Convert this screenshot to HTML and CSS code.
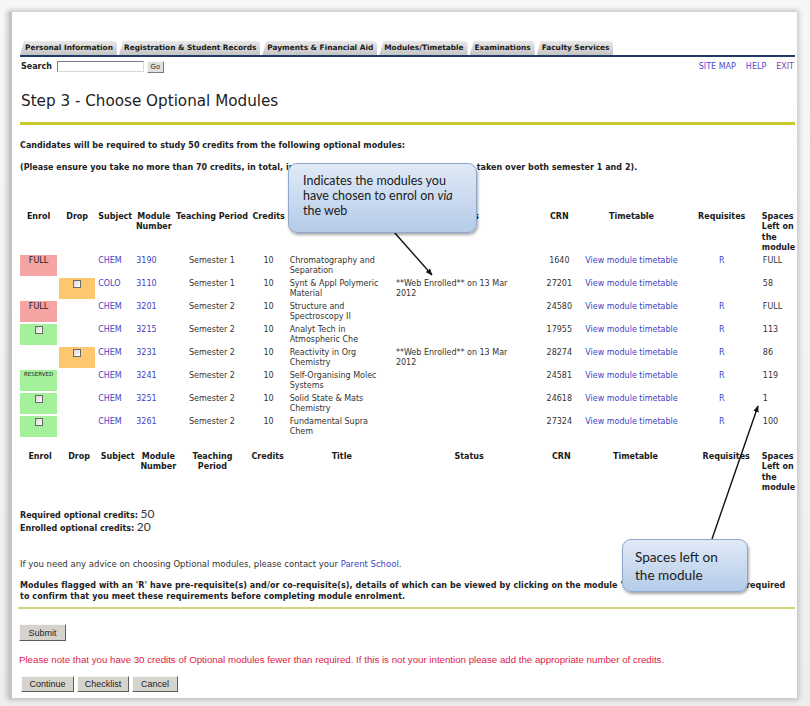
FILE: index.html
```html
<!DOCTYPE html>
<html lang="en">
<head>
<meta charset="utf-8">
<title>Step 3 - Choose Optional Modules</title>
<link rel="stylesheet" href="styles.css">
</head>
<body>
<div class="frame">
  <div class="page">
    <nav class="tabs">
      <span class="tab">Personal Information</span>
      <span class="tab">Registration &amp; Student Records</span>
      <span class="tab">Payments &amp; Financial Aid</span>
      <span class="tab">Modules/Timetable</span>
      <span class="tab">Examinations</span>
      <span class="tab">Faculty Services</span>
    </nav>
    <div class="searchbar">
      <span class="search-label">Search</span>
      <input class="search-input" type="text">
      <button class="go">Go</button>
      <div class="toplinks"><a href="#">SITE MAP</a><a href="#">HELP</a><a href="#" class="visited">EXIT</a></div>
    </div>
    <h1 class="title">Step 3 - Choose Optional Modules</h1>
    <div class="rule"></div>
    <p class="info">Candidates will be required to study 50 credits from the following optional modules:</p>
    <p class="info info2">(Please ensure you take no more than 70 credits, in total, in each semester, i.e. at most 140 credits taken over both semester 1 and 2).</p>

    <table class="modules">
      <colgroup>
        <col class="c-enrol"><col class="c-drop"><col class="c-subj"><col class="c-num"><col class="c-period"><col class="c-cred"><col class="c-title"><col class="c-status"><col class="c-crn"><col class="c-tt"><col class="c-req"><col class="c-space">
      </colgroup>
      <thead>
        <tr>
          <th>Enrol</th><th>Drop</th><th>Subject</th><th>Module Number</th><th>Teaching Period</th><th>Credits</th><th>Title</th><th>Status</th><th>CRN</th><th>Timetable</th><th>Requisites</th><th class="left">Spaces Left on the module</th>
        </tr>
      </thead>
      <tbody>
        <tr>
          <td class="full">FULL</td><td></td><td><a href="#">CHEM</a></td><td><a href="#">3190</a></td><td class="ctr">Semester 1</td><td class="ctr">10</td><td class="ttl">Chromatography and Separation</td><td class="st"></td><td class="ctr">1640</td><td class="ctr"><a href="#">View module timetable</a></td><td class="ctr"><a href="#">R</a></td><td class="sp">FULL</td>
        </tr>
        <tr>
          <td></td><td class="drop"><input class="cb" type="checkbox"></td><td><a href="#">COLO</a></td><td><a href="#">3110</a></td><td class="ctr">Semester 1</td><td class="ctr">10</td><td class="ttl">Synt &amp; Appl Polymeric Material</td><td class="st">**Web Enrolled** on 13 Mar 2012</td><td class="ctr">27201</td><td class="ctr"><a href="#">View module timetable</a></td><td class="ctr"></td><td class="sp">58</td>
        </tr>
        <tr>
          <td class="full">FULL</td><td></td><td><a href="#">CHEM</a></td><td><a href="#">3201</a></td><td class="ctr">Semester 2</td><td class="ctr">10</td><td class="ttl">Structure and Spectroscopy II</td><td class="st"></td><td class="ctr">24580</td><td class="ctr"><a href="#">View module timetable</a></td><td class="ctr"><a href="#">R</a></td><td class="sp">FULL</td>
        </tr>
        <tr>
          <td class="open"><input class="cb" type="checkbox"></td><td></td><td><a href="#">CHEM</a></td><td><a href="#">3215</a></td><td class="ctr">Semester 2</td><td class="ctr">10</td><td class="ttl">Analyt Tech in Atmospheric Che</td><td class="st"></td><td class="ctr">17955</td><td class="ctr"><a href="#">View module timetable</a></td><td class="ctr"><a href="#">R</a></td><td class="sp">113</td>
        </tr>
        <tr>
          <td></td><td class="drop"><input class="cb" type="checkbox"></td><td><a href="#">CHEM</a></td><td><a href="#">3231</a></td><td class="ctr">Semester 2</td><td class="ctr">10</td><td class="ttl">Reactivity in Org Chemistry</td><td class="st">**Web Enrolled** on 13 Mar 2012</td><td class="ctr">28274</td><td class="ctr"><a href="#">View module timetable</a></td><td class="ctr"><a href="#">R</a></td><td class="sp">86</td>
        </tr>
        <tr>
          <td class="open reserved">RESERVED</td><td></td><td><a href="#">CHEM</a></td><td><a href="#">3241</a></td><td class="ctr">Semester 2</td><td class="ctr">10</td><td class="ttl">Self-Organising Molec Systems</td><td class="st"></td><td class="ctr">24581</td><td class="ctr"><a href="#">View module timetable</a></td><td class="ctr"><a href="#">R</a></td><td class="sp">119</td>
        </tr>
        <tr>
          <td class="open"><input class="cb" type="checkbox"></td><td></td><td><a href="#">CHEM</a></td><td><a href="#">3251</a></td><td class="ctr">Semester 2</td><td class="ctr">10</td><td class="ttl">Solid State &amp; Mats Chemistry</td><td class="st"></td><td class="ctr">24618</td><td class="ctr"><a href="#">View module timetable</a></td><td class="ctr"><a href="#">R</a></td><td class="sp">1</td>
        </tr>
        <tr>
          <td class="open"><input class="cb" type="checkbox"></td><td></td><td><a href="#">CHEM</a></td><td><a href="#">3261</a></td><td class="ctr">Semester 2</td><td class="ctr">10</td><td class="ttl">Fundamental Supra Chem</td><td class="st"></td><td class="ctr">27324</td><td class="ctr"><a href="#">View module timetable</a></td><td class="ctr"><a href="#">R</a></td><td class="sp">100</td>
        </tr>
      </tbody>
    </table>

    <table class="modules foot">
      <colgroup>
        <col class="f-enrol"><col class="f-drop"><col class="f-subj"><col class="f-num"><col class="f-period"><col class="f-cred"><col class="f-title"><col class="f-status"><col class="f-crn"><col class="f-tt"><col class="f-req"><col class="f-space">
      </colgroup>
      <thead>
        <tr>
          <th>Enrol</th><th>Drop</th><th>Subject</th><th>Module Number</th><th>Teaching Period</th><th>Credits</th><th>Title</th><th>Status</th><th>CRN</th><th>Timetable</th><th>Requisites</th><th class="left">Spaces Left on the module</th>
        </tr>
      </thead>
    </table>

    <div class="credits">
      <div><b>Required optional credits:</b> <span class="val">50</span></div>
      <div><b>Enrolled optional credits:</b> <span class="val">20</span></div>
    </div>

    <p class="advice">If you need any advice on choosing Optional modules, please contact your <a href="#">Parent School</a>.</p>
    <p class="flag">Modules flagged with an 'R' have pre-requisite(s) and/or co-requisite(s), details of which can be viewed by clicking on the module 'R' link. Students would be required<br>to confirm that you meet these requirements before completing module enrolment.</p>
    <div class="rule2"></div>

    <button class="btn btn-submit">Submit</button>
    <p class="warn">Please note that you have 30 credits of Optional modules fewer than required. If this is not your intention please add the appropriate number of credits.</p>
    <div class="actions">
      <button class="btn btn-continue">Continue</button>
      <button class="btn btn-checklist">Checklist</button>
      <button class="btn btn-cancel">Cancel</button>
    </div>
  </div>

  <svg class="arrows" width="785" height="686" viewBox="0 0 785 686" xmlns="http://www.w3.org/2000/svg">
    <defs>
      <marker id="head" viewBox="0 0 10 8" refX="9" refY="4" markerWidth="7" markerHeight="6" orient="auto" markerUnits="userSpaceOnUse">
        <path d="M0,0 L10,4 L0,8 Z" fill="#111"/>
      </marker>
    </defs>
    <line x1="382" y1="220" x2="420" y2="263" stroke="#111" stroke-width="1.4" marker-end="url(#head)"/>
    <line x1="700" y1="527" x2="746" y2="394" stroke="#111" stroke-width="1.4" marker-end="url(#head)"/>
  </svg>

  <div class="callout callout-enrol">Indicates the modules you have chosen to enrol on <i>via</i> the web</div>
  <div class="callout callout-spaces">Spaces left on the module</div>
</div>
</body>
</html>
```
FILE: styles.css
```css
html, body {
  margin: 0;
  padding: 0;
}
body {
  width: 810px;
  height: 706px;
  overflow: hidden;
  background: linear-gradient(#f7f7f7, #eeeeee);
  font-family: "DejaVu Sans", Verdana, sans-serif;
  color: #333;
}
a {
  color: #3f3fc6;
  text-decoration: none;
}

.frame {
  position: relative;
  box-sizing: border-box;
  margin: 12px 0 0 9px;
  width: 788px;
  height: 686px;
  background: #fff;
  border-left: 3px solid #c4c4c4;
  box-shadow: 0 0 5px 2px rgba(0, 0, 0, 0.2);
}
.page {
  padding: 29px 2px 0 8px;
}

/* tabs */
.tabs {
  display: flex;
  align-items: flex-end;
  gap: 2px;
  height: 14px;
  border-bottom: 2px solid #1f3b66;
}
.tab {
  font-size: 7.4px;
  font-weight: bold;
  color: #1a1a1a;
  line-height: 14px;
  padding: 0 4px 0 5px;
  background: linear-gradient(#e8e8e8, #c4c4c4);
  border-radius: 0 4px 0 0;
  clip-path: polygon(4px 0, 100% 0, 100% 100%, 0 100%);
}

/* search */
.searchbar {
  display: flex;
  align-items: center;
  height: 13px;
  margin-top: 3px;
}
.search-label {
  font-size: 8px;
  font-weight: bold;
  color: #222;
  margin-left: 1px;
}
.search-input {
  box-sizing: border-box;
  width: 87px;
  height: 11px;
  margin: 0 0 0 5px;
  padding: 0;
  border: 1px solid;
  border-color: #7a7a7a #d8d8d8 #d8d8d8 #7a7a7a;
  background: #fff;
}
.go {
  box-sizing: border-box;
  width: 17px;
  height: 12px;
  margin-left: 3px;
  padding: 0;
  font: 7px "DejaVu Sans", sans-serif;
  color: #333;
  background: #e2e0da;
  border: 1px solid;
  border-color: #f4f4f4 #7a7a7a #7a7a7a #f4f4f4;
}
.toplinks {
  margin-left: auto;
  margin-right: 1px;
  display: flex;
  gap: 10px;
  font-size: 8px;
}
.toplinks a {
  color: #4a4ac8;
}
.toplinks a.visited {
  color: #8a3fa6;
}

/* heading */
.title {
  margin: 19px 0 0 1px;
  font-size: 15.2px;
  font-weight: normal;
  line-height: 18px;
  color: #222;
}
.rule {
  height: 3px;
  margin-top: 12px;
  background: #c9c92c;
}
.info {
  margin: 16px 0 0;
  font-size: 8px;
  font-weight: bold;
  line-height: 10px;
  color: #222;
  white-space: nowrap;
  letter-spacing: 0.03px;
}
.info2 {
  margin-top: 12px;
}

/* modules table */
.modules {
  border-collapse: separate;
  border-spacing: 2px;
  table-layout: fixed;
  width: 781px;
  margin: 37px 0 0 -2px;
  font-size: 8px;
  line-height: 10px;
}
.modules th {
  padding: 0;
  vertical-align: top;
  font-weight: bold;
  color: #1a1a1a;
  line-height: 10.3px;
}
.modules th.left {
  text-align: left;
}
.modules td {
  vertical-align: top;
  padding: 1px 1px 0;
  height: 20px;
  color: #333;
}
.c-enrol { width: 37px; }
.c-drop { width: 36px; }
.c-subj { width: 36px; }
.c-num { width: 37px; }
.c-period { width: 75px; }
.c-cred { width: 34px; }
.c-title { width: 101px; }
.c-status { width: 146px; }
.c-crn { width: 40px; }
.c-tt { width: 100px; }
.c-req { width: 76px; }
.c-space { width: 35px; }

.f-enrol { width: 40px; }
.f-drop { width: 34px; }
.f-subj { width: 39px; }
.f-num { width: 38px; }
.f-period { width: 66px; }
.f-cred { width: 40px; }
.f-title { width: 104px; }
.f-status { width: 146px; }
.f-crn { width: 34px; }
.f-tt { width: 110px; }
.f-req { width: 67px; }
.f-space { width: 35px; }

.ctr { text-align: center; }
.modules td.ttl { padding-left: 2px; }
.modules td.st { padding: 1px 22px 0 5px; }
.sp { text-align: left; }

.modules td.full {
  background: #f5a3a3;
  text-align: center;
  color: #222;
}
.modules td.open {
  background: #a3f29b;
  text-align: center;
}
.modules td.drop {
  background: #fcc76f;
  text-align: center;
}
.modules td.reserved {
  font-size: 5.5px;
  line-height: 8px;
  color: #222;
  padding-top: 0;
}
.cb {
  appearance: none;
  -webkit-appearance: none;
  box-sizing: border-box;
  width: 8px;
  height: 8px;
  margin: 1px 0 0;
  border: 1px solid #6a6a6a;
  background: linear-gradient(135deg, #d8d8d8, #ffffff);
  vertical-align: top;
}

.foot {
  margin-top: 11px;
}

/* credits & notes */
.credits {
  margin-top: 13px;
  font-size: 8px;
  line-height: 11px;
}
.credits b {
  color: #222;
}
.credits .val {
  font-family: Lato, "Open Sans", sans-serif;
  font-size: 12px;
  color: #333;
}
.advice {
  margin: 25px 0 0;
  font-size: 8.5px;
  line-height: 10px;
  color: #333;
}
.flag {
  margin: 11px 0 0;
  font-size: 8px;
  font-weight: bold;
  line-height: 11px;
  color: #222;
  white-space: nowrap;
  letter-spacing: 0.08px;
}
.rule2 {
  height: 2px;
  margin: 5px 0 0 -2px;
  background: #d4d47c;
}

.btn {
  box-sizing: border-box;
  height: 17px;
  padding: 0;
  font: 9px "Liberation Sans", Arial, sans-serif;
  color: #222;
  background: #d6d3cd;
  border: 1px solid;
  border-color: #f8f8f8 #5e5e5e #5e5e5e #f8f8f8;
}
.btn-submit {
  display: block;
  width: 47px;
  margin: 15px 0 0 -1px;
}
.warn {
  margin: 13px 0 0 -1px;
  font: 9.7px/11px "Liberation Sans", Arial, sans-serif;
  color: #e0204a;
  white-space: nowrap;
}
.actions {
  display: flex;
  gap: 3px;
  margin: 11px 0 0 1px;
}
.actions .btn {
  height: 16px;
}
.btn-continue { width: 53px; }
.btn-checklist { width: 52px; }
.btn-cancel { width: 46px; }

/* overlays */
.arrows {
  position: absolute;
  left: 0;
  top: 0;
  pointer-events: none;
}
.callout {
  position: absolute;
  box-sizing: border-box;
  border: 1px solid #8ea8cb;
  border-radius: 9px;
  background: linear-gradient(#e0eaf7, #b5cbe8);
  box-shadow: 1px 2px 3px rgba(0, 0, 0, 0.35);
  font-family: Lato, "Open Sans", sans-serif;
  color: #1b1b1b;
}
.callout-enrol {
  left: 276px;
  top: 151px;
  width: 189px;
  height: 70px;
  padding: 9px 8px 0 14px;
  font-size: 12.5px;
  line-height: 15px;
}
.callout-spaces {
  left: 610px;
  top: 527px;
  width: 126px;
  height: 53px;
  padding: 8px 6px 0 12px;
  font-size: 13.6px;
  line-height: 18px;
}
```
